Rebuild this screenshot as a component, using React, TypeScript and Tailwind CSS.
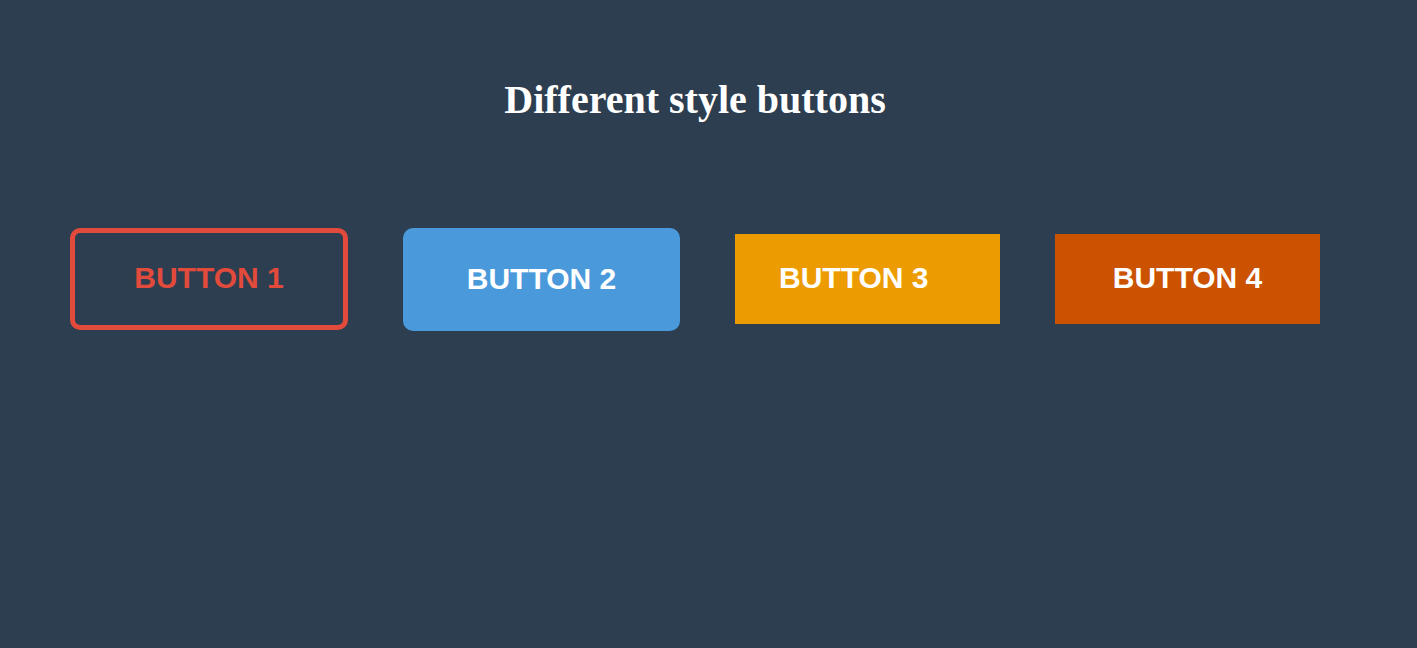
export default function App() {
  return (
    <div className="min-h-[648px] bg-[#2c3e50] font-['Liberation_Sans',Arial,sans-serif]">
      <div className="ml-[70px] w-[1250px] pt-[77px]">
        <h1 className="text-center font-['Liberation_Serif','Times_New_Roman',serif] text-[40px] font-bold leading-[46px] text-white">
          Different style buttons
        </h1>
        <div className="mt-[105px] flex items-start gap-[55px]">
          <button className="flex h-[102px] w-[278px] items-center justify-center rounded-[10px] border-[5px] border-[#e24b3b] pb-[3px] text-[30px] font-bold text-[#e24b3b]">
            BUTTON 1
          </button>
          <button className="flex h-[103px] w-[277px] items-center justify-center rounded-[10px] bg-[#4a9adb] pb-[3px] text-[30px] font-bold text-white">
            BUTTON 2
          </button>
          <button className="mt-[6px] flex h-[90px] w-[265px] items-center bg-[#ec9c00] pb-[3px] pl-[44px] text-[30px] font-bold text-white">
            BUTTON 3
          </button>
          <button className="mt-[6px] flex h-[90px] w-[265px] items-center justify-center bg-[#cb5200] pb-[3px] text-[30px] font-bold text-white">
            BUTTON 4
          </button>
        </div>
      </div>
    </div>
  )
}
